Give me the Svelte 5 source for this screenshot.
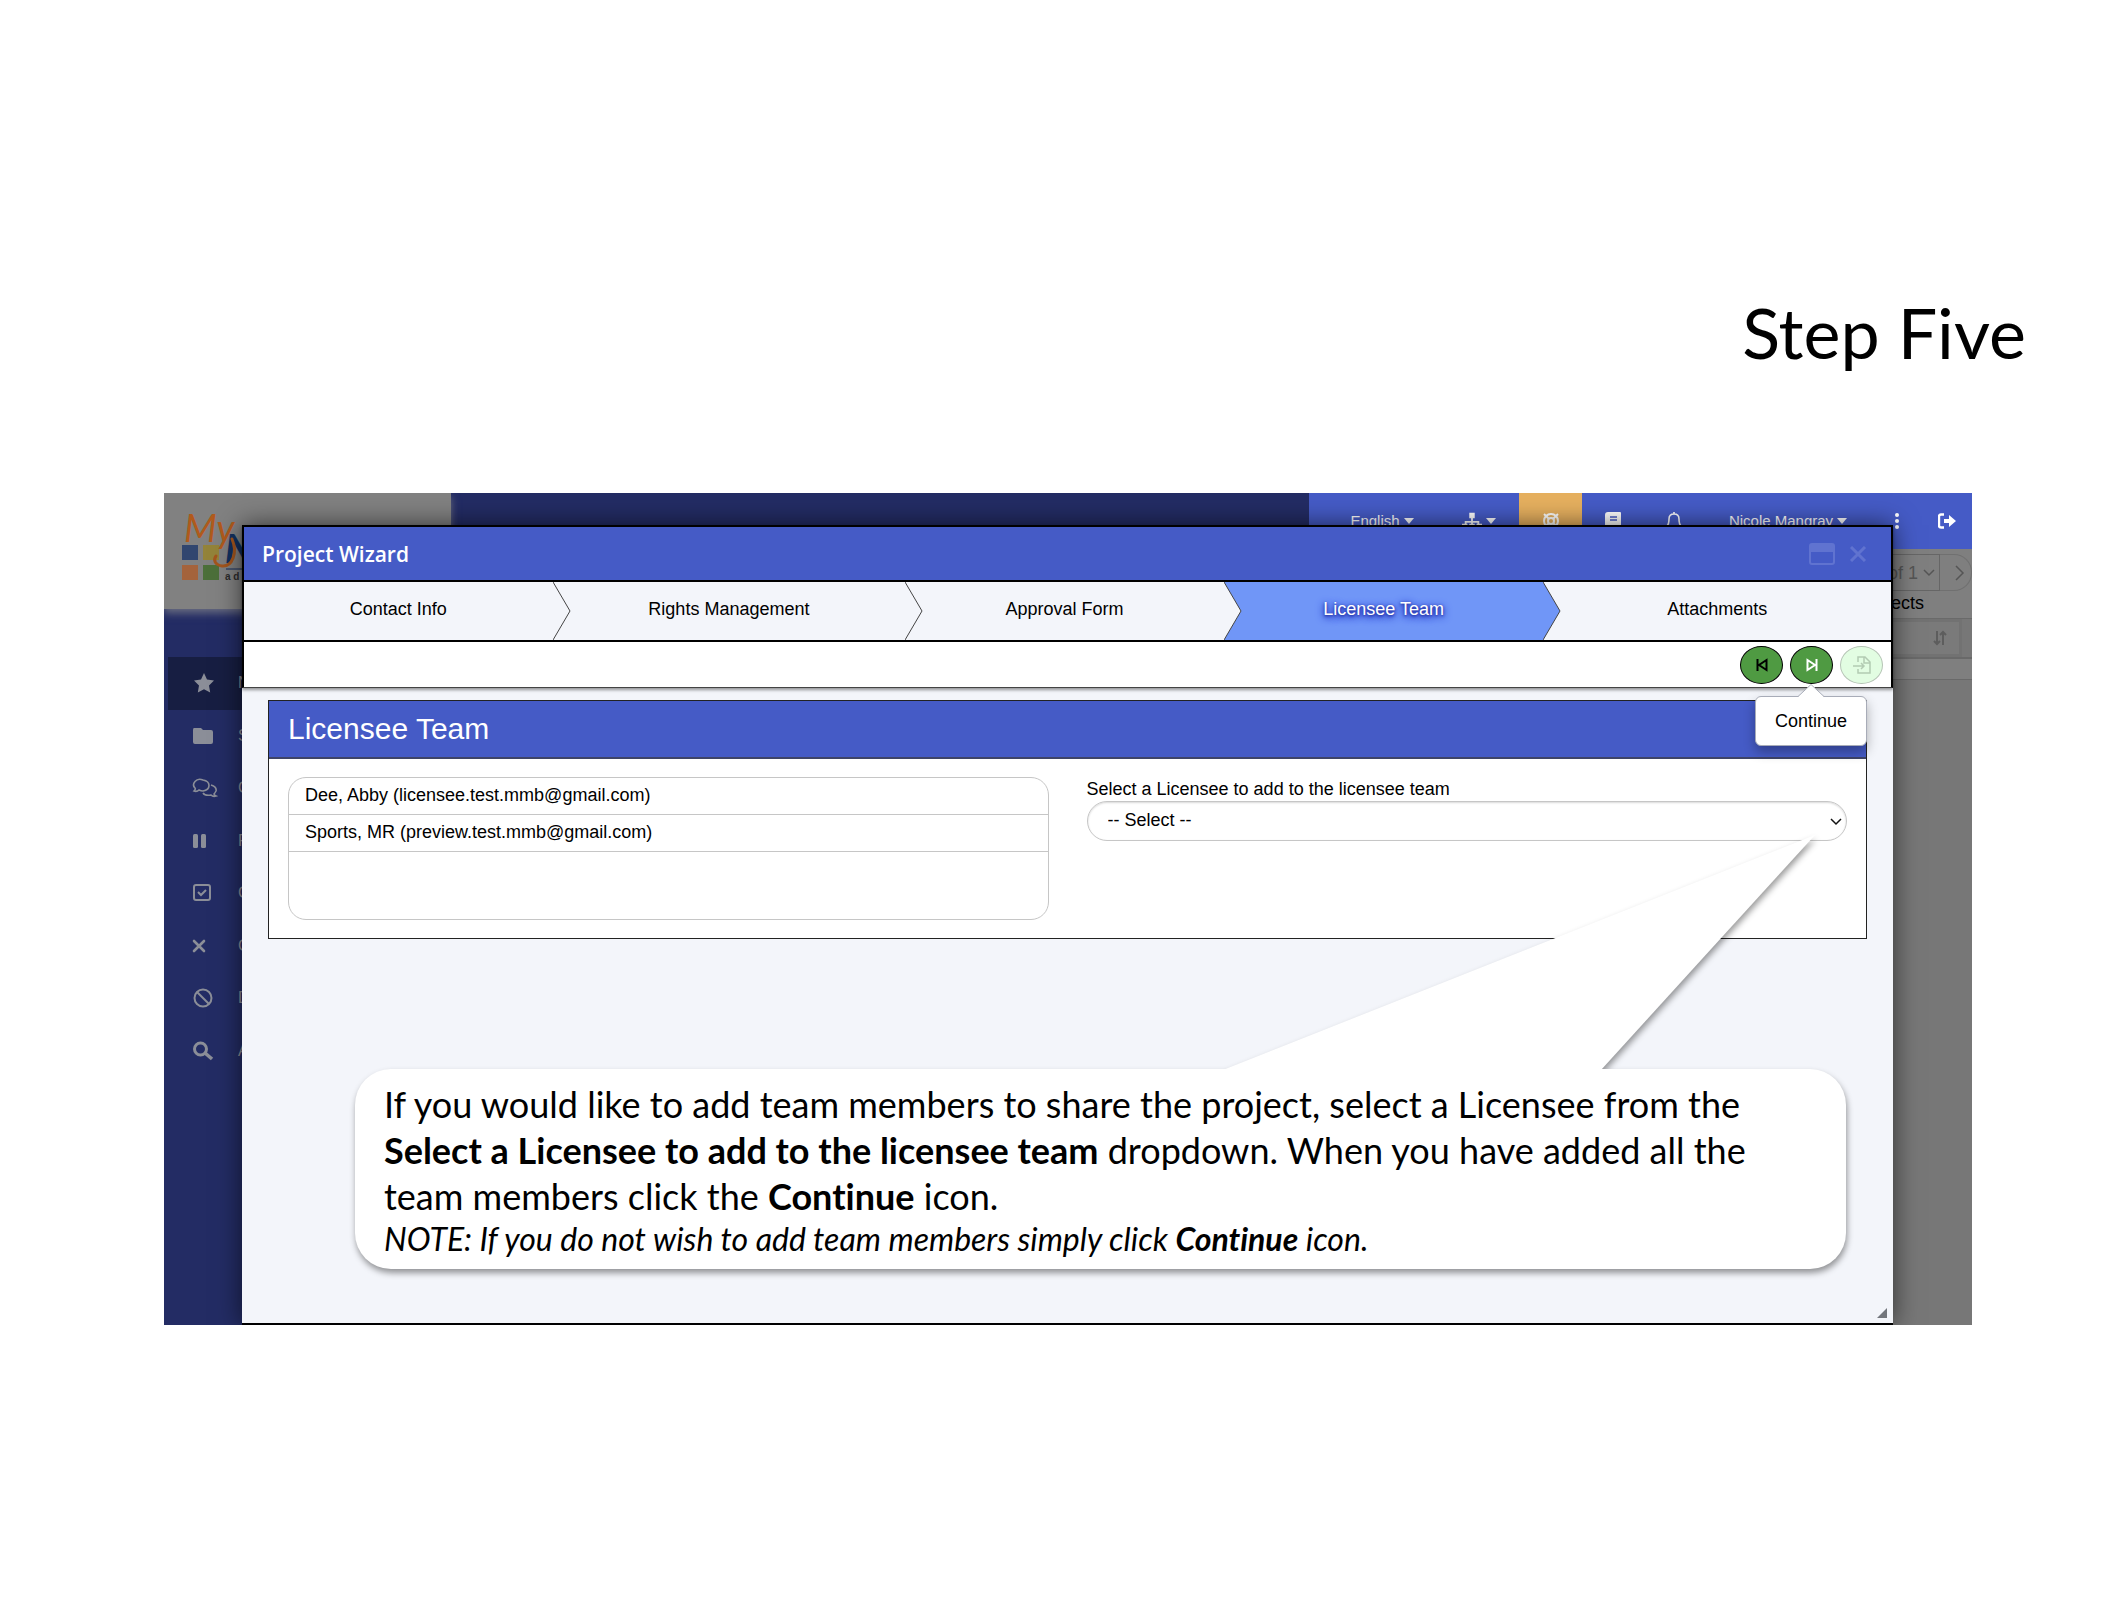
<script>
  const steps = [
    { label: 'Contact Info', active: false },
    { label: 'Rights Management', active: false },
    { label: 'Approval Form', active: false },
    { label: 'Licensee Team', active: true },
    { label: 'Attachments', active: false }
  ];

  const menu = [
    { icon: 'star', label: 'N' },
    { icon: 'folder', label: 'S' },
    { icon: 'comments', label: 'C' },
    { icon: 'pause', label: 'P' },
    { icon: 'check', label: 'C' },
    { icon: 'times', label: 'C' },
    { icon: 'ban', label: 'D' },
    { icon: 'search', label: 'A' }
  ];

  let team = ['Dee, Abby (licensee.test.mmb@gmail.com)', 'Sports, MR (preview.test.mmb@gmail.com)'];
  let selected = '';
</script>

<main>
  <h1>Step Five</h1>

  <div class="frame">
    <div class="app">
      <header class="topbar">
        <div class="logo">
          <svg width="90" height="76" viewBox="0 0 90 76" aria-hidden="true">
            <rect x="0" y="36" width="16" height="15" fill="#31466f" />
            <rect x="21" y="36" width="16" height="15" fill="#93833a" />
            <rect x="0" y="56" width="16" height="15" fill="#a4633c" />
            <rect x="21" y="56" width="16" height="15" fill="#4c6f3a" />
            <text x="43" y="54" class="logo-n">N</text>
            <text x="2" y="33" class="logo-my">My</text>
            <path d="M50 30 C56 44 50 58 40 57 C33 56 31 51 34 47" fill="none" stroke="#a3551d" stroke-width="3" stroke-linecap="round" />
            <path d="M44 60 H90" stroke="#152c5c" stroke-width="1" />
            <text x="43" y="71" class="logo-a">a d</text>
          </svg>
        </div>
        <nav class="tools" aria-label="Account">
          <button class="lang">English <i class="caret"></i></button>
          <button class="site" aria-label="Sites">
            <svg width="20" height="18" viewBox="0 0 22 18"><path d="M8 0h6v6h-2v3h7v3h3v6h-6v-6h1v-1h-5v1h2v6H8v-6h2v-1H5v1h1v6H0v-6h3V9h7V6H8z" fill="currentColor" /></svg>
            <i class="caret"></i>
          </button>
          <button class="help" aria-label="Help">
            <svg width="18" height="18" viewBox="0 0 18 18" fill="none" stroke="currentColor">
              <circle cx="9" cy="9" r="7" stroke-width="2" /><circle cx="9" cy="9" r="3" stroke-width="2" />
              <path d="M2 2l5 5M16 2l-5 5M2 16l5-5M16 16l-5-5" stroke-width="2" />
            </svg>
          </button>
          <button class="icon" aria-label="Docs">
            <svg width="16" height="18" viewBox="0 0 16 18"><path d="M3 0h12q1 0 1 1v12q-1 2 0 4v1H3q-3 0-3-3V3q0-3 3-3z" fill="currentColor" /><path d="M5 5h7M5 8h7" stroke="#455bc6" stroke-width="1.5" /></svg>
          </button>
          <button class="icon" aria-label="Alerts">
            <svg width="16" height="18" viewBox="0 0 16 18" fill="none" stroke="currentColor" stroke-width="1.6"><path d="M8 0v2M1 14q2-2 2-7q0-5 5-5t5 5q0 5 2 7zM6 15q2 3 4 0" /></svg>
          </button>
          <button class="user">Nicole Mangray <i class="caret"></i></button>
          <button class="dots" aria-label="More">
            <svg width="4" height="16" viewBox="0 0 4 16" fill="currentColor"><circle cx="2" cy="2" r="2" /><circle cx="2" cy="8" r="2" /><circle cx="2" cy="14" r="2" /></svg>
          </button>
          <button class="exit" aria-label="Log out">
            <svg width="18" height="16" viewBox="0 0 18 16"><path d="M6 1.500H3q-2 0-2 2v9q0 2 2 2h3" fill="none" stroke="currentColor" stroke-width="2.400" /><path d="M6 6h5V2l7 6-7 6v-4H6z" fill="currentColor" /></svg>
          </button>
        </nav>
      </header>

      <nav class="sidebar" aria-label="Projects">
        {#each menu as item, i}
          <a href="#{item.icon}" class:current={i === 0}>
            <svg width="26" height="20" viewBox="0 0 26 20" fill="none" stroke="currentColor" stroke-width="2">
              {#if item.icon === 'star'}
                <path d="M12 0l3 6.500 7 1-5 5 1.200 7-6.200-3.300L5.800 19.500 7 12.500l-5-5 7-1z" fill="currentColor" stroke="none" />
              {:else if item.icon === 'folder'}
                <path d="M2 2h7l2 2h8q2 0 2 2v10q0 2-2 2H3q-2 0-2-2V4q0-2 1-2z" fill="currentColor" stroke="none" />
              {:else if item.icon === 'comments'}
                <path d="M2 13q2-2 1-3Q0 7 3 3.500t8-1.500q6 1 6 5.500t-6 5.500q-2 0-4-1-2 2-5 1zM19 7q6 2 5 6-1 2-2 3 0 1 2 2-3 1-5-1-6 1-8-2" stroke-width="1.600" />
              {:else if item.icon === 'pause'}
                <rect x="1" y="3" width="5" height="14" rx="1.500" fill="currentColor" stroke="none" />
                <rect x="9" y="3" width="5" height="14" rx="1.500" fill="currentColor" stroke="none" />
              {:else if item.icon === 'check'}
                <rect x="2" y="2" width="16" height="15" rx="2" /><path d="M6 9l3 3 5-5" />
              {:else if item.icon === 'times'}
                <path d="M2 5l10 10M12 5L2 15" stroke-width="2.600" stroke-linecap="round" />
              {:else if item.icon === 'ban'}
                <circle cx="11" cy="10" r="8.500" /><path d="M5 4l12 12" />
              {:else}
                <circle cx="8.500" cy="8" r="6" stroke-width="3" /><path d="M13 12l7 6" stroke-width="3.600" />
              {/if}
            </svg>
            <span>{item.label}</span>
          </a>
        {/each}
      </nav>

      <section class="projects">
        <div class="pager">
          <span class="page">of 1 <svg width="12" height="8" viewBox="0 0 12 8"><path d="M1 1l5 5 5-5" fill="none" stroke="currentColor" stroke-width="1.500" /></svg></span>
          <button aria-label="Next page"><svg width="10" height="16" viewBox="0 0 10 16"><path d="M1 1l7 7-7 7" fill="none" stroke="currentColor" stroke-width="1.500" /></svg></button>
        </div>
        <p>ects</p>
        <div class="sort">
          <svg width="14" height="16" viewBox="0 0 14 16" fill="none" stroke="currentColor" stroke-width="2"><path d="M4 1v12M1 11l3 3 3-3M10 15V3M7 5l3-3 3 3" /></svg>
        </div>
        <div class="strip"></div>
      </section>
    </div>

    <div class="modal" role="dialog" aria-labelledby="wizard-title">
      <div class="modal-top">
        <div class="titlebar">
          <h2 id="wizard-title">Project Wizard</h2>
          <button aria-label="Maximize"><svg width="26" height="22" viewBox="0 0 26 22"><rect x="1" y="1" width="24" height="20" rx="2" fill="none" stroke="currentColor" stroke-width="2" /><path d="M1 1h24v8H1z" fill="currentColor" /></svg></button>
          <button aria-label="Close"><svg width="18" height="16" viewBox="0 0 18 16"><path d="M2 1l14 14M16 1L2 15" stroke="currentColor" stroke-width="3" /></svg></button>
        </div>

        <ol class="steps">
          {#each steps as step, i}
            <li class:active={step.active}>
              {#if i > 0}
                <svg class="chevron" class:filled={steps[i - 1].active} viewBox="0 0 18 58" preserveAspectRatio="none">
                  <path d="M0 0l17 29L0 58" />
                </svg>
              {/if}
              {step.label}
            </li>
          {/each}
        </ol>

        <div class="actions">
          <button class="round" aria-label="Back"><svg width="12" height="14" viewBox="0 0 12 14"><path d="M1.500 1v12M10.500 2v10L3 7z" /></svg></button>
          <div class="with-tip">
            <button class="round next" aria-label="Continue"><svg width="12" height="14" viewBox="0 0 12 14"><path d="M10.500 1v12M1.500 2v10L9 7z" /></svg></button>
            <div class="tip" role="tooltip">
              <svg width="26" height="14" viewBox="0 0 26 14"><path d="M0 13L13 0l13 13v1H0z" fill="#fff" /><path d="M0 12.500L13 .5l13 12" fill="none" stroke="#a8acb8" stroke-width="1" /></svg>
              Continue
            </div>
          </div>
          <button class="round off" disabled aria-label="Submit"><svg width="18" height="18" viewBox="0 0 18 18"><path d="M5 6V1h7l5 5v11H5v-4M11 1v6h6M0 10h11M8 7l3 3-3 3" /></svg></button>
        </div>
      </div>

      <div class="modal-body">
        <section class="panel">
          <h3>Licensee Team</h3>
          <div class="fields">
            <ul class="team">
              {#each team as member}
                <li>{member}</li>
              {/each}
            </ul>
            <div class="picker">
              <label for="licensee">Select a Licensee to add to the licensee team</label>
              <div class="select">
                <select id="licensee" bind:value={selected}>
                  <option value="">-- Select --</option>
                </select>
                <svg width="12" height="8" viewBox="0 0 12 8"><path d="M1 1l5 5 5-5" fill="none" stroke="#111" stroke-width="1.500" /></svg>
              </div>
            </div>
          </div>
        </section>

        <svg class="grip" width="10" height="10" viewBox="0 0 10 10"><path d="M10 0v10H0z" fill="#73767c" /></svg>
      </div>
    </div>

    <aside class="callout">
      <svg class="tail" width="592" height="235" viewBox="0 0 592 235"><path d="M0 235L592 0 378 235z" fill="#fff" /></svg>
      <p>
        If you would like to add team members to share the project, select a Licensee from the<br />
        <strong>Select a Licensee to add to the licensee team</strong> dropdown. When you have added all the<br />
        team members click the <strong>Continue</strong> icon.
      </p>
      <p class="note">NOTE: If you do not wish to add team members simply click <strong>Continue</strong> icon.</p>
    </aside>
  </div>
</main>

<style>
  :global(body) {
    margin: 0;
    background: #fff;
  }
  main {
    padding: 288px 156px 120px 164px;
    color: #000;
    font: 18px/24px 'Liberation Sans', Arial, sans-serif;
  }
  h1, h2, h3, p, ul, ol {
    margin: 0;
    padding: 0;
    font-weight: 400;
    list-style: none;
  }
  button {
    padding: 0;
    border: 0;
    background: none;
    color: inherit;
    font: inherit;
    white-space: nowrap;
  }
  svg {
    display: block;
    flex: none;
  }
  h1 {
    margin: 0 -54px 0 0;
    padding-bottom: 117px;
    font: 70px/88px Lato, sans-serif;
    text-align: right;
  }

  /* everything in the frame shares one grid cell, back to front */
  .frame {
    display: grid;
    overflow: hidden;
  }
  .app, .modal, .callout {
    grid-area: 1 / 1;
    min-width: 0;
  }

  .app {
    display: grid;
    grid-template: 56px 1fr / 287px 1fr;
    background: #777;
  }
  .topbar {
    grid-column: 1 / 3;
    display: flex;
    justify-content: space-between;
    background: #232c64;
  }
  .logo {
    width: 269px;
    height: 100px;
    padding: 16px 0 0 18px;
    background: #818181;
    box-shadow: 0 4px 8px #6b6e80;
    z-index: 1;
  }
  .logo-my {
    fill: #b05a1c;
    font: italic 38px Lato, sans-serif;
  }
  .logo-n {
    fill: #12305f;
    font: italic 900 40px Lato, sans-serif;
  }
  .logo-a {
    fill: #2b2b2b;
    font: bold 10px 'Liberation Sans', Arial, sans-serif;
  }
  .tools {
    display: flex;
    background: #455bc6;
    color: #fff;
    font-size: 15px;
  }
  .tools button {
    display: flex;
    align-items: center;
    justify-content: center;
    gap: 4px;
  }
  .lang {
    width: 146px;
  }
  .site {
    width: 48px;
    margin-right: 16px;
  }
  .tools .help {
    width: 63px;
    background: #e6b05f;
  }
  .icon {
    width: 61px;
  }
  .user {
    width: 168px;
  }
  .dots {
    width: 50px;
  }
  .exit {
    width: 34px;
    margin: 0 16px 0 0;
  }
  .tools .exit {
    justify-content: flex-end;
  }
  .caret {
    border: 5px solid transparent;
    border-top: 6px solid;
    border-bottom: 0;
  }

  .sidebar {
    display: grid;
    grid-auto-rows: 1fr;
    align-self: start;
    height: 420px;
    padding: 108px 0 0 4px;
    background: #232c64;
  }
  .sidebar a {
    display: flex;
    align-items: center;
    gap: 20px;
    padding-left: 24px;
    color: #8b8e98;
    font-size: 16px;
    text-decoration: none;
  }
  .sidebar .current {
    background: #171e42;
  }

  .projects {
    display: flex;
    flex-direction: column;
    align-items: stretch;
    text-align: right;
  }
  .pager {
    display: flex;
    justify-content: flex-end;
    padding-top: 5px;
    background: #7f7f7f;
    color: #555;
  }
  .page, .pager button {
    display: flex;
    align-items: center;
    height: 35px;
    border: 1px solid #666;
  }
  .page {
    gap: 5px;
    padding: 0 4px 0 40px;
  }
  .pager button {
    width: 32px;
    justify-content: center;
    padding-left: 8px;
    box-sizing: border-box;
    border-color: #707070;
    border-left: 0;
    border-radius: 0 18px 18px 0;
    height: 37px;
  }
  .projects p {
    height: 25px;
    padding: 0 48px 2px 0;
    border-bottom: 1px solid #6a6a6a;
    background: #7f7f7f;
  }
  .sort {
    display: flex;
    justify-content: flex-end;
    padding: 8px 12px;
    margin-right: 10px;
    border: 3px solid #727272;
    background: #7a7a7a;
    color: #5d5d5d;
  }
  .strip {
    height: 20px;
    border: solid #696969;
    border-width: 2px 0 1px;
    background: #7f7f7f;
  }

  .app {
    background: linear-gradient(90deg, #232c64 287px, #777 287px);
  }

  .modal {
    display: flex;
    flex-direction: column;
    margin: 32px 79px 0 78px;
    border-bottom: 2px solid #000;
    background: #f3f5fa;
    box-shadow: 0 0 24px rgba(0, 0, 0, 0.6);
    z-index: 1;
  }
  .modal-top {
    border: 2px solid #000;
    border-bottom: 1px solid #444;
    box-shadow: 0 2px 3px rgba(0, 0, 0, 0.4);
    z-index: 1;
  }
  .titlebar {
    display: flex;
    align-items: center;
    gap: 14px;
    height: 53px;
    padding: 0 24px 0 18px;
    border-bottom: 2px solid #000;
    background: #455bc6;
    color: #6073d0;
  }
  h2 {
    flex: 1;
    color: #fff;
    font: 600 21px/28px 'Open Sans', sans-serif;
  }
  .steps {
    display: grid;
    grid-template-columns: 309fr 353fr 319fr 320fr 348fr;
    height: 58px;
    border-bottom: 2px solid #000;
    background: #f3f5fa;
  }
  .steps li {
    position: relative;
    display: flex;
    align-items: center;
    justify-content: center;
    padding-bottom: 4px;
  }
  .steps .active {
    background: #7096f7;
    color: #fff;
    text-shadow: 0 1px 3px #1a2390, 0 2px 6px #2334c8, 0 2px 8px #2334c8;
  }
  .chevron {
    position: absolute;
    top: 0;
    left: 0;
    width: 18px;
    height: 58px;
    fill: #f3f5fa;
    stroke: #444;
  }
  .chevron.filled {
    fill: #7096f7;
  }
  .actions {
    display: flex;
    align-items: center;
    justify-content: flex-end;
    gap: 7px;
    height: 45px;
    padding-right: 8px;
    background: #fff;
  }
  .round {
    display: grid;
    place-items: center;
    width: 43px;
    height: 38px;
    border: 1px solid #000;
    border-radius: 50%;
    background: #4f9a42;
  }
  .round svg {
    fill: none;
    stroke: currentColor;
    stroke-width: 2;
  }
  .next {
    color: #fff;
  }
  .off {
    border-color: #b5c4b5;
    background: #e2fde2;
    color: #b3cbb3;
  }
  .off svg {
    stroke-width: 1.5;
  }
  .with-tip {
    position: relative;
  }
  .tip {
    position: absolute;
    top: 50px;
    right: -34px;
    padding: 12px 19px;
    border: 1px solid #a8acb8;
    border-radius: 6px;
    background: #fff;
    box-shadow: 0 6px 12px rgba(0, 0, 0, 0.3);
  }
  .tip svg {
    position: absolute;
    top: -13px;
    left: 42px;
  }

  .modal-body {
    flex: 1;
    display: flex;
    flex-direction: column;
    justify-content: space-between;
    padding: 12px 26px 0;
  }
  .panel {
    border: 1px solid #222;
    background: #fff;
  }
  h3 {
    padding: 8px 19px;
    border-bottom: 2px solid #3e4468;
    background: #455bc6;
    color: #fff;
    font-size: 30px;
    line-height: 40px;
  }
  .fields {
    display: grid;
    grid-template-columns: 1fr 1fr;
    gap: 38px;
    padding: 18px 19px;
  }
  .team {
    height: 141px;
    border: 1px solid #c6c6c6;
    border-radius: 18px;
  }
  .team li {
    padding: 5px 16px 7px;
    border-bottom: 1px solid #c6c6c6;
  }
  .picker label {
    display: block;
  }
  .select {
    position: relative;
  }
  select {
    width: 100%;
    height: 40px;
    padding: 0 20px 2px;
    border: 1px solid #c6c6c6;
    border-radius: 20px;
    appearance: none;
    background: #fff;
    color: #000;
    font: inherit;
    box-shadow: inset 0 1px 2px rgba(0, 0, 0, 0.15);
  }
  .select svg {
    position: absolute;
    top: 17px;
    right: 5px;
  }
  .grip {
    align-self: flex-end;
    margin: 0 -20px 5px 0;
  }

  .callout {
    position: relative;
    box-sizing: border-box;
    height: 200px;
    margin: 576px 126px 56px 191px;
    padding: 12px 29px;
    border-radius: 36px;
    background: #fff;
    font: 36px/46px Lato, sans-serif;
    font-variant-ligatures: none;
    white-space: nowrap;
    filter: drop-shadow(1px 4px 3px rgba(0, 0, 0, 0.4));
    z-index: 2;
  }
  .tail {
    position: absolute;
    right: 31px;
    bottom: 199px;
  }
  .callout strong {
    font-weight: 700;
  }
  .callout .note {
    font-size: 32px;
    line-height: 40px;
    font-style: italic;
  }
</style>
